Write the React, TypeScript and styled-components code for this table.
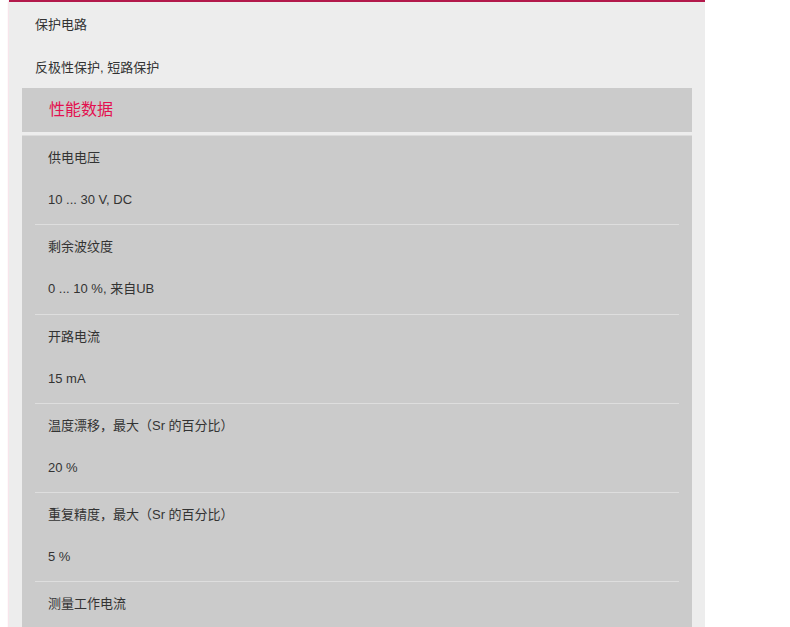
import React from "react";
import styled, { createGlobalStyle } from "styled-components";

const Global = createGlobalStyle`
  html, body { margin: 0; padding: 0; background: #ffffff; }
  body {
    font-family: "Liberation Sans", Arial, "Noto Sans CJK SC", sans-serif;
    font-size: 13px;
    color: #333333;
    overflow: hidden;
  }
`;

const Page = styled.div`
  padding-left: 9px;
  width: 696px;
  height: 627px;
  overflow: hidden;
`;

const Panel = styled.div`
  background: #ededed;
  border-top: 2px solid #b3194b;
  box-shadow: 0 1px 2px rgba(179, 25, 75, 0.35);
  padding: 1px 13px 0 13px;
  min-height: 640px;
`;

const TopItem = styled.div<{ $h: number }>`
  height: ${(p) => p.$h}px;
  line-height: ${(p) => p.$h}px;
  padding-left: 13px;
  color: #333333;
`;

const SectionHeader = styled.div`
  background: #cbcbcb;
  height: 44px;
  line-height: 44px;
  padding-left: 27px;
  font-size: 16px;
  color: #e3104f;
`;

const SectionBody = styled.div`
  background: #cbcbcb;
  margin-top: 3px;
  padding: 1px 13px 0 13px;
  box-shadow: inset 0 1px 0 #dcdcdc;
  min-height: 520px;
`;

const Row = styled.div<{ $last?: boolean }>`
  border-bottom: ${(p) => (p.$last ? "none" : "1px solid #dedede")};
  padding-left: 13px;
  padding-bottom: 4.3px;
`;

const Label = styled.div`
  height: 44px;
  line-height: 44px;
`;

const Value = styled.div`
  height: 40px;
  line-height: 40px;
`;

const rows: [string, string | null][] = [
  ["供电电压", "10 ... 30 V, DC"],
  ["剩余波纹度", "0 ... 10 %, 来自UB"],
  ["开路电流", "15 mA"],
  ["温度漂移，最大（Sr 的百分比）", "20 %"],
  ["重复精度，最大（Sr 的百分比）", "5 %"],
  ["测量工作电流", null],
];

export default function App() {
  return (
    <Page>
      <Global />
      <Panel>
        <TopItem $h={44}>保护电路</TopItem>
        <TopItem $h={41}>反极性保护, 短路保护</TopItem>
        <SectionHeader>性能数据</SectionHeader>
        <SectionBody>
          {rows.map(([l, v]) => (
            <Row key={l} $last={!v}>
              <Label>{l}</Label>
              {v && <Value>{v}</Value>}
            </Row>
          ))}
        </SectionBody>
      </Panel>
    </Page>
  );
}
